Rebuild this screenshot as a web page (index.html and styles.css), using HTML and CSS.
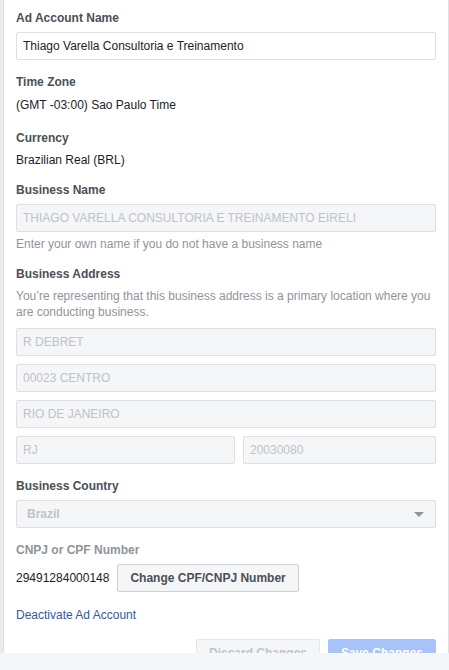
FILE: index.html
```html
<!DOCTYPE html>
<html>
<head>
<meta charset="utf-8">
<link rel="stylesheet" href="styles.css">
</head>
<body>
<div class="panel">
  <div class="field">
    <div class="label">Ad Account Name</div>
    <div class="input active">Thiago Varella Consultoria e Treinamento</div>
  </div>
  <div class="field">
    <div class="label">Time Zone</div>
    <div class="value tz">(GMT -03:00) Sao Paulo Time</div>
  </div>
  <div class="field cur">
    <div class="label">Currency</div>
    <div class="value">Brazilian Real (BRL)</div>
  </div>
  <div class="field">
    <div class="label">Business Name</div>
    <div class="input disabled">THIAGO VARELLA CONSULTORIA E TREINAMENTO EIRELI</div>
    <div class="help">Enter your own name if you do not have a business name</div>
  </div>
  <div class="field">
    <div class="label">Business Address</div>
    <div class="desc">You’re representing that this business address is a primary location where you are conducting business.</div>
    <div class="stack">
      <div class="input disabled">R DEBRET</div>
      <div class="input disabled">00023 CENTRO</div>
      <div class="input disabled">RIO DE JANEIRO</div>
      <div class="pair">
        <div class="input disabled">RJ</div>
        <div class="input disabled">20030080</div>
      </div>
    </div>
  </div>
  <div class="field">
    <div class="label">Business Country</div>
    <div class="input disabled select"><span>Brazil</span><span class="arrow"></span></div>
  </div>
  <div class="field">
    <div class="label muted">CNPJ or CPF Number</div>
    <div class="cnpj">
      <span class="num">29491284000148</span>
      <button class="btn">Change CPF/CNPJ Number</button>
    </div>
  </div>
  <div class="field deact">
    <a class="link">Deactivate Ad Account</a>
  </div>
  <div class="actions">
    <button class="btn discard">Discard Changes</button>
    <button class="btn save">Save Changes</button>
  </div>
</div>
<div class="footer"></div>
</body>
</html>
```

FILE: styles.css
```css
* { box-sizing: border-box; }
html, body { margin: 0; padding: 0; overflow: hidden; }
body {
  background: #e9ebee;
  font-family: "Liberation Sans", Arial, Helvetica, sans-serif;
  font-size: 12px;
  line-height: 16px;
  color: #1d2129;
  height: 670px;
}
.panel {
  margin-left: 3px;
  background: #fff;
  border-left: 1px solid #dddfe2;
  border-right: 1px solid #dddfe2;
  padding: 10px 12px 3px 12px;
}
.field { margin-bottom: 14px; }
.field.cur { margin-top: 17px; }
.label {
  font-weight: bold;
  color: #4b4f56;
  margin-bottom: 6px;
}
.label.muted { color: #90949c; }
.value { color: #1d2129; }
.tz { margin-top: 7px; }
.input {
  height: 28px;
  border: 1px solid #dddfe2;
  border-radius: 2px;
  padding: 0 6px;
  display: flex;
  align-items: center;
  white-space: nowrap;
  overflow: hidden;
}
.input.active { background: #fff; color: #1d2129; }
.input.disabled { background: #f5f6f7; color: #bec3c9; }
.help { color: #90949c; margin-top: 4px; }
.desc { color: #90949c; margin-bottom: 8px; }
.stack { display: flex; flex-direction: column; gap: 8px; }
.pair { display: grid; grid-template-columns: 219px 1fr; gap: 8px; }
.select { justify-content: space-between; padding: 0 11px 0 10px; font-weight: bold; }
.arrow {
  width: 0; height: 0;
  border-left: 5px solid transparent;
  border-right: 5px solid transparent;
  border-top: 5px solid #90949c;
  margin-top: 1px;
}
.cnpj { display: flex; align-items: center; gap: 8px; }
.num { color: #1d2129; }
.btn {
  font-family: "Liberation Sans", Arial, Helvetica, sans-serif;
  font-size: 12px;
  font-weight: bold;
  height: 28px;
  padding: 0 12px;
  border-radius: 2px;
  border: 1px solid #ced0d4;
  background: #f5f6f7;
  color: #4b4f56;
  line-height: 26px;
  white-space: nowrap;
}
.deact { margin-top: 15px; margin-bottom: 16px; }
.link { color: #385898; }
.actions { display: flex; justify-content: flex-end; gap: 8px; }
.discard { width: 124px; padding: 0; color: #bec3c9; border-color: #e5e6e9; background: #f5f6f7; }
.save { width: 108px; padding: 0; background: #a7c3f7; border-color: #a7c3f7; color: #fff; }
.footer {
  position: fixed;
  left: 0; right: 0; bottom: 0;
  height: 17px;
  background: #f5f6f7;
}
```
